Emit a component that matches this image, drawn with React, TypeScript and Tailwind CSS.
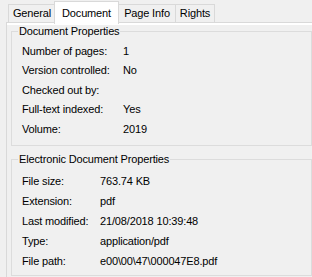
import React from 'react';

type Row = { label: string; value: string };

const docRows: Row[] = [
  { label: 'Number of pages:', value: '1' },
  { label: 'Version controlled:', value: 'No' },
  { label: 'Checked out by:', value: '' },
  { label: 'Full-text indexed:', value: 'Yes' },
  { label: 'Volume:', value: '2019' },
];

const fileRows: Row[] = [
  { label: 'File size:', value: '763.74 KB' },
  { label: 'Extension:', value: 'pdf' },
  { label: 'Last modified:', value: '21/08/2018 10:39:48' },
  { label: 'Type:', value: 'application/pdf' },
  { label: 'File path:', value: 'e00\\00\\47\\000047E8.pdf' },
];

const App: React.FC = () => {
  return (
    <div
      className="h-[277px] w-[312px] overflow-hidden bg-[#f0f0f0] text-[11px] tracking-[-0.15px] text-black"
      style={{ fontFamily: '"Liberation Sans", Arial, sans-serif' }}
    >
      {/* tabs */}
      <div className="flex h-[22px] items-end pl-[8px]">
        <div className="flex h-[18px] w-[46px] items-center justify-center border-t border-l border-[#d9d9d9] pb-[1px] pl-[1px]">
          General
        </div>
        <div className="relative z-10 -mb-[2px] flex h-[23px] w-[65px] items-start justify-center border-x border-t border-[#d9d9d9] bg-white pt-[3px]">
          Document
        </div>
        <div className="flex h-[18px] w-[57px] items-center justify-center border-t border-r border-[#d9d9d9] pb-[1px]">
          Page Info
        </div>
        <div className="flex h-[18px] w-[39px] items-center justify-center border-t border-r border-[#d9d9d9] pb-[1px]">
          Rights
        </div>
      </div>

      {/* tab page */}
      <div className="ml-[6px] h-[260px] border-t border-l border-[#d9d9d9]">
        <div className="h-[2px] bg-white" />
        <div className="pl-[4px]">
          <fieldset className="h-[121px] border border-[#dcdcdc]">
            <legend className="ml-[6px] px-[1px] leading-[13px]">Document Properties</legend>
            <div className="pt-[3px]">
              {docRows.map((r) => (
                <div key={r.label} className="flex h-[19.5px] items-center pl-[10px]">
                  <span className="w-[101px]">{r.label}</span>
                  <span>{r.value}</span>
                </div>
              ))}
            </div>
          </fieldset>

          <fieldset className="mt-[7px] h-[123px] border border-[#dcdcdc]">
            <legend className="ml-[6px] px-[1px] leading-[13px]">Electronic Document Properties</legend>
            <div className="pt-[5px]">
              {fileRows.map((r) => (
                <div key={r.label} className="flex h-[20px] items-center pl-[10px]">
                  <span className="w-[78px]">{r.label}</span>
                  <span>{r.value}</span>
                </div>
              ))}
            </div>
          </fieldset>
        </div>
      </div>
    </div>
  );
};

export default App;
